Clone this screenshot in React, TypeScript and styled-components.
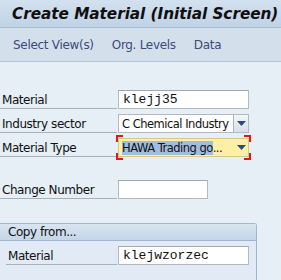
import * as React from 'react';
import styled, { createGlobalStyle } from 'styled-components';

const GlobalStyle = createGlobalStyle`
  body {
    margin: 0;
    background: #e6eef6;
    font-family: "DejaVu Sans", Verdana, sans-serif;
  }
`;

const Screen = styled.div`
  width: 281px;
  height: 280px;
  overflow: hidden;
  background: #e6eef6;
`;

const TitleBar = styled.div`
  height: 27px;
  display: flex;
  align-items: center;
  padding-left: 12px;
  background: linear-gradient(#d3e1ef, #bfd2e6);
  border-bottom: 1px solid #a9bfd7;
`;

const Title = styled.h1`
  margin: 0;
  font-family: "DejaVu Sans", Verdana, sans-serif;
  font-size: 15.3px;
  font-weight: 900;
  font-style: italic;
  color: #101010;
  white-space: nowrap;
  letter-spacing: -0.05px;
`;

const Toolbar = styled.div`
  height: 33px;
  display: flex;
  align-items: center;
  gap: 18px;
  padding-left: 13px;
  background: #d3e0ec;
  border-bottom: 1px solid #b3c4d6;
`;

const ToolItem = styled.span`
  font-size: 12px;
  color: #3d4a78;
  letter-spacing: -0.3px;
  white-space: nowrap;
`;

const Content = styled.div`
  padding-top: 23px;
`;

const Row = styled.div<{ $indent?: number }>`
  display: flex;
  align-items: flex-end;
  height: 24px;
  padding-left: ${(p) => p.$indent ?? 0}px;
`;

const Label = styled.div<{ $width?: number }>`
  width: ${(p) => p.$width ?? 117}px;
  height: 24px;
  box-sizing: border-box;
  padding: 0 0 1px 2px;
  display: flex;
  align-items: flex-end;
  font-size: 12px;
  letter-spacing: -0.45px;
  color: #111;
  border-bottom: 1px solid #a9b0b8;
  white-space: nowrap;
`;

const Input = styled.div<{ $width: number }>`
  width: ${(p) => p.$width}px;
  height: 19px;
  margin-left: 1px;
  box-sizing: border-box;
  background: #fff;
  border: 1px solid #b4b9bf;
  border-top-color: #a3a8ae;
  display: flex;
  align-items: center;
  padding-left: 4px;
  font-family: "Liberation Mono", monospace;
  font-size: 13px;
  color: #111;
`;

const Select = styled.div<{ $focused?: boolean }>`
  position: relative;
  width: 131px;
  height: 19px;
  margin-left: 1px;
  box-sizing: border-box;
  display: flex;
  align-items: center;
  background: ${(p) => (p.$focused ? '#fdf0a6' : '#fff')};
  border: 1px solid ${(p) => (p.$focused ? '#d8c888' : '#b4b9bf')};
  font-size: 11.5px;
  letter-spacing: -0.5px;
  color: #111;
  white-space: nowrap;
`;

const SelectText = styled.span`
  flex: 1;
  overflow: hidden;
  padding-left: 3px;
`;

const Highlight = styled.span`
  background: #a2bcdc;
  padding: 1px 0;
`;

const DropButton = styled.div<{ $plain?: boolean }>`
  width: 14px;
  height: 17px;
  display: flex;
  align-items: center;
  justify-content: center;
  background: ${(p) => (p.$plain ? 'transparent' : 'linear-gradient(#f4f7fb, #d5dfea)')};
  border-left: ${(p) => (p.$plain ? 'none' : '1px solid #a9b5c3')};
`;

const Arrow = () => (
  <svg width="9" height="5" viewBox="0 0 9 5">
    <path d="M0 0 H9 L4.5 5 Z" fill="#2b4a78" />
  </svg>
);

const Corner = styled.span<{ $pos: 'tl' | 'tr' | 'bl' | 'br' }>`
  position: absolute;
  width: 5px;
  height: 5px;
  border-color: #e01818;
  border-style: solid;
  border-width: 0;
  ${(p) => (p.$pos[0] === 't' ? 'top: -4px;' : 'bottom: -4px;')}
  ${(p) => (p.$pos[1] === 'l' ? 'left: -3px;' : 'right: -3px;')}
  ${(p) => (p.$pos[0] === 't' ? 'border-top-width: 2px;' : 'border-bottom-width: 2px;')}
  ${(p) => (p.$pos[1] === 'l' ? 'border-left-width: 2px;' : 'border-right-width: 2px;')}
`;

const Spacer = styled.div<{ $h: number }>`
  height: ${(p) => p.$h}px;
`;

const Group = styled.div`
  width: 257px;
  height: 60px;
  box-sizing: border-box;
  border: 1px solid #9fb7d2;
  border-left: none;
  border-bottom: none;
  border-top-right-radius: 3px;
  background: #e2ebf5;
`;

const GroupHeader = styled.div`
  height: 16px;
  display: flex;
  align-items: center;
  padding-left: 8px;
  background: linear-gradient(#d9e5f1, #c4d6e9);
  border-bottom: 1px solid #9fb7d2;
  font-size: 12px;
  letter-spacing: -0.45px;
  color: #111;
`;

const App = (): JSX.Element => (
  <Screen>
    <GlobalStyle />
    <TitleBar>
      <Title>Create Material (Initial Screen)</Title>
    </TitleBar>
    <Toolbar>
      <ToolItem>Select View(s)</ToolItem>
      <ToolItem>Org. Levels</ToolItem>
      <ToolItem>Data</ToolItem>
    </Toolbar>
    <Content>
      <Row>
        <Label>Material</Label>
        <Input $width={131}>klejj35</Input>
      </Row>
      <Row>
        <Label>Industry sector</Label>
        <Select>
          <SelectText>C Chemical Industry</SelectText>
          <DropButton>
            <Arrow />
          </DropButton>
        </Select>
      </Row>
      <Row>
        <Label>Material Type</Label>
        <Select $focused>
          <Corner $pos="tl" />
          <Corner $pos="tr" />
          <Corner $pos="bl" />
          <Corner $pos="br" />
          <SelectText>
            <Highlight>HAWA Trading go</Highlight>...
          </SelectText>
          <DropButton $plain>
            <Arrow />
          </DropButton>
        </Select>
      </Row>
      <Spacer $h={18} />
      <Row>
        <Label>Change Number</Label>
        <Input $width={90} />
      </Row>
      <Spacer $h={24} />
      <Group>
        <GroupHeader>Copy from...</GroupHeader>
        <Row $indent={6}>
          <Label $width={111}>Material</Label>
          <Input $width={131}>klejwzorzec</Input>
        </Row>
      </Group>
    </Content>
  </Screen>
);

export default App;
